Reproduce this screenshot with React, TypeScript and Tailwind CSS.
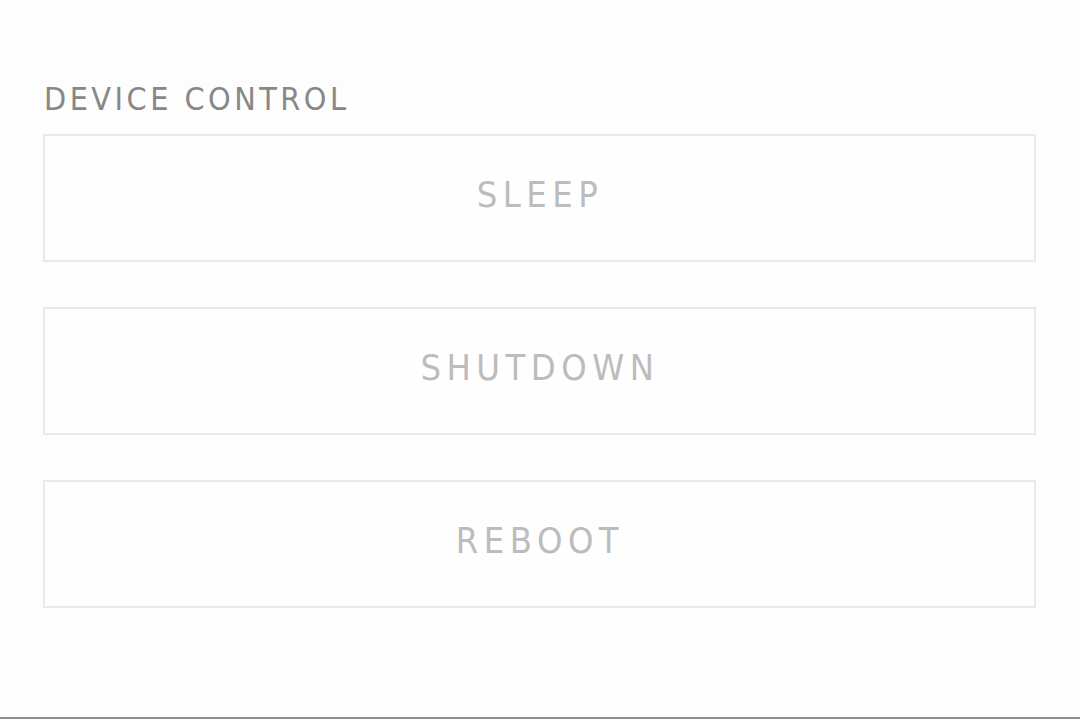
const actions = ["SLEEP", "SHUTDOWN", "REBOOT"];

const font = { fontFamily: '"DejaVu Sans Condensed", "Liberation Sans", sans-serif' };

export default function App() {
  return (
    <div className="h-[719px] w-full bg-[#fdfdfd] flex flex-col border-b-2 border-[#8e8e8e] overflow-hidden">
      <div className="flex flex-col pl-[43px] pr-[44px] pt-[83px]">
        {/* Section label */}
        <div className="text-[32px] leading-none tracking-[3.5px] text-[#878787] pl-[1px]" style={font}>
          DEVICE CONTROL
        </div>

        {/* Action buttons */}
        <div className="flex flex-col gap-[45px] mt-[19px]">
          {actions.map((label) => (
            <button
              key={label}
              className="h-[128px] w-full border-2 border-[#e9e9e9] bg-[#fefefe] flex items-center justify-center pb-[6px] text-[36px] leading-none tracking-[5.5px] text-[#bcbcbc]"
              style={font}
            >
              <span className="pl-[1px]">{label}</span>
            </button>
          ))}
        </div>
      </div>
    </div>
  );
}
